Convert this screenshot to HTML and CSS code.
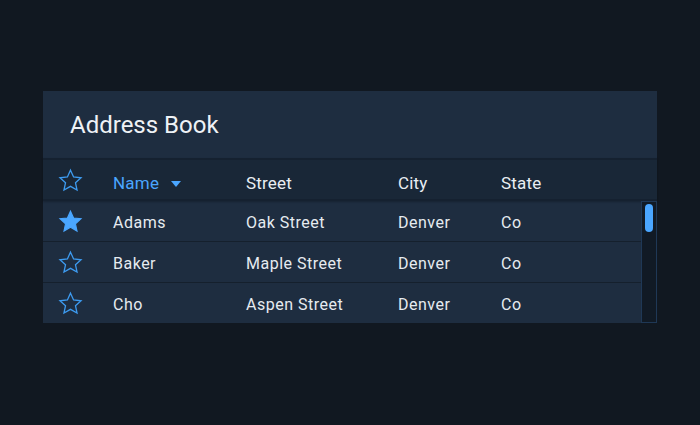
FILE: index.html
```html
<!DOCTYPE html>
<html>
<head>
<meta charset="utf-8">
<link rel="stylesheet" href="styles.css">
</head>
<body>
<div class="page">
  <div class="card">
    <div class="title">Address Book</div>
    <div class="table">
      <div class="row head">
        <div class="c-star"><svg class="star" viewBox="0 0 24 24"><path class="outline" d="M12 2.8l2.75 6.05 6.6.7-4.93 4.45 1.38 6.5L12 17.2l-5.8 3.3 1.38-6.5L2.65 9.55l6.6-.7z"/></svg></div>
        <div class="c-name sorted">Name <span class="arrow"></span></div>
        <div class="c-street">Street</div>
        <div class="c-city">City</div>
        <div class="c-state">State</div>
      </div>
      <div class="body">
        <div class="rows">
          <div class="row">
            <div class="c-star"><svg class="star" viewBox="0 0 24 24"><path class="filled" d="M12 2.8l2.75 6.05 6.6.7-4.93 4.45 1.38 6.5L12 17.2l-5.8 3.3 1.38-6.5L2.65 9.55l6.6-.7z"/></svg></div>
            <div class="c-name">Adams</div>
            <div class="c-street">Oak Street</div>
            <div class="c-city">Denver</div>
            <div class="c-state">Co</div>
          </div>
          <div class="row">
            <div class="c-star"><svg class="star" viewBox="0 0 24 24"><path class="outline" d="M12 2.8l2.75 6.05 6.6.7-4.93 4.45 1.38 6.5L12 17.2l-5.8 3.3 1.38-6.5L2.65 9.55l6.6-.7z"/></svg></div>
            <div class="c-name">Baker</div>
            <div class="c-street">Maple Street</div>
            <div class="c-city">Denver</div>
            <div class="c-state">Co</div>
          </div>
          <div class="row">
            <div class="c-star"><svg class="star" viewBox="0 0 24 24"><path class="outline" d="M12 2.8l2.75 6.05 6.6.7-4.93 4.45 1.38 6.5L12 17.2l-5.8 3.3 1.38-6.5L2.65 9.55l6.6-.7z"/></svg></div>
            <div class="c-name">Cho</div>
            <div class="c-street">Aspen Street</div>
            <div class="c-city">Denver</div>
            <div class="c-state">Co</div>
          </div>
        </div>
        <div class="scrollbar"><div class="thumb"></div></div>
      </div>
    </div>
  </div>
</div>
</body>
</html>
```

FILE: styles.css
```css
* { box-sizing: border-box; }
html, body { margin: 0; padding: 0; }
body {
  background: #111821;
  font-family: Roboto, "Liberation Sans", sans-serif;
  width: 700px;
  height: 425px;
}
.page {
  padding: 91px 43px 0 43px;
}
.card {
  width: 614px;
  background: #1e2d40;
}
.title {
  height: 67px;
  padding-left: 27px;
  display: flex;
  align-items: center;
  font-size: 24px;
  color: #eef2f6;
}
.table { display: flex; flex-direction: column; }
.row {
  display: grid;
  grid-template-columns: 70px 133px 152px 103px 1fr;
  align-items: center;
  height: 41px;
  font-size: 16px;
  letter-spacing: 0.5px;
  color: #e6ebf0;
  border-bottom: 1px solid #15202d;
  padding-top: 2px;
}
.row:last-child { border-bottom: none; height: 40px; }
.row.head {
  height: 43px;
  background: #192737;
  border-top: 2px solid #152130;
  border-bottom: 2px solid #152130;
  font-size: 17px;
  letter-spacing: 0.2px;
  color: #e9eef3;
  padding-top: 7px;
  box-shadow: 0 1px 2px rgba(0,0,0,0.25);
}
.row .c-star { margin-top: -2px; }
.row.head .c-star { margin-top: -6px; }
.c-star { display: flex; justify-content: flex-start; padding-left: 14px; }
.star { width: 27px; height: 27px; }
.star .outline { fill: none; stroke: #3d9bf0; stroke-width: 1.15; stroke-linejoin: miter; }
.star .filled { fill: #4aa6ff; stroke: #4aa6ff; stroke-width: 1; }
.sorted { color: #4aa6ff; display: flex; align-items: center; }
.arrow {
  display: inline-block;
  width: 0; height: 0;
  margin-left: 12px;
  margin-top: 2px;
  border-left: 5px solid transparent;
  border-right: 5px solid transparent;
  border-top: 6px solid #4aa6ff;
}
.body { display: flex; }
.rows { flex: 1; }
.scrollbar {
  width: 16px;
  background: #111a25;
  border: 1px solid #1f3856;
  padding: 2px 2px 0 3px;
}
.thumb {
  width: 8px;
  height: 28px;
  border-radius: 4px;
  background: #4aa6ff;
}
```
